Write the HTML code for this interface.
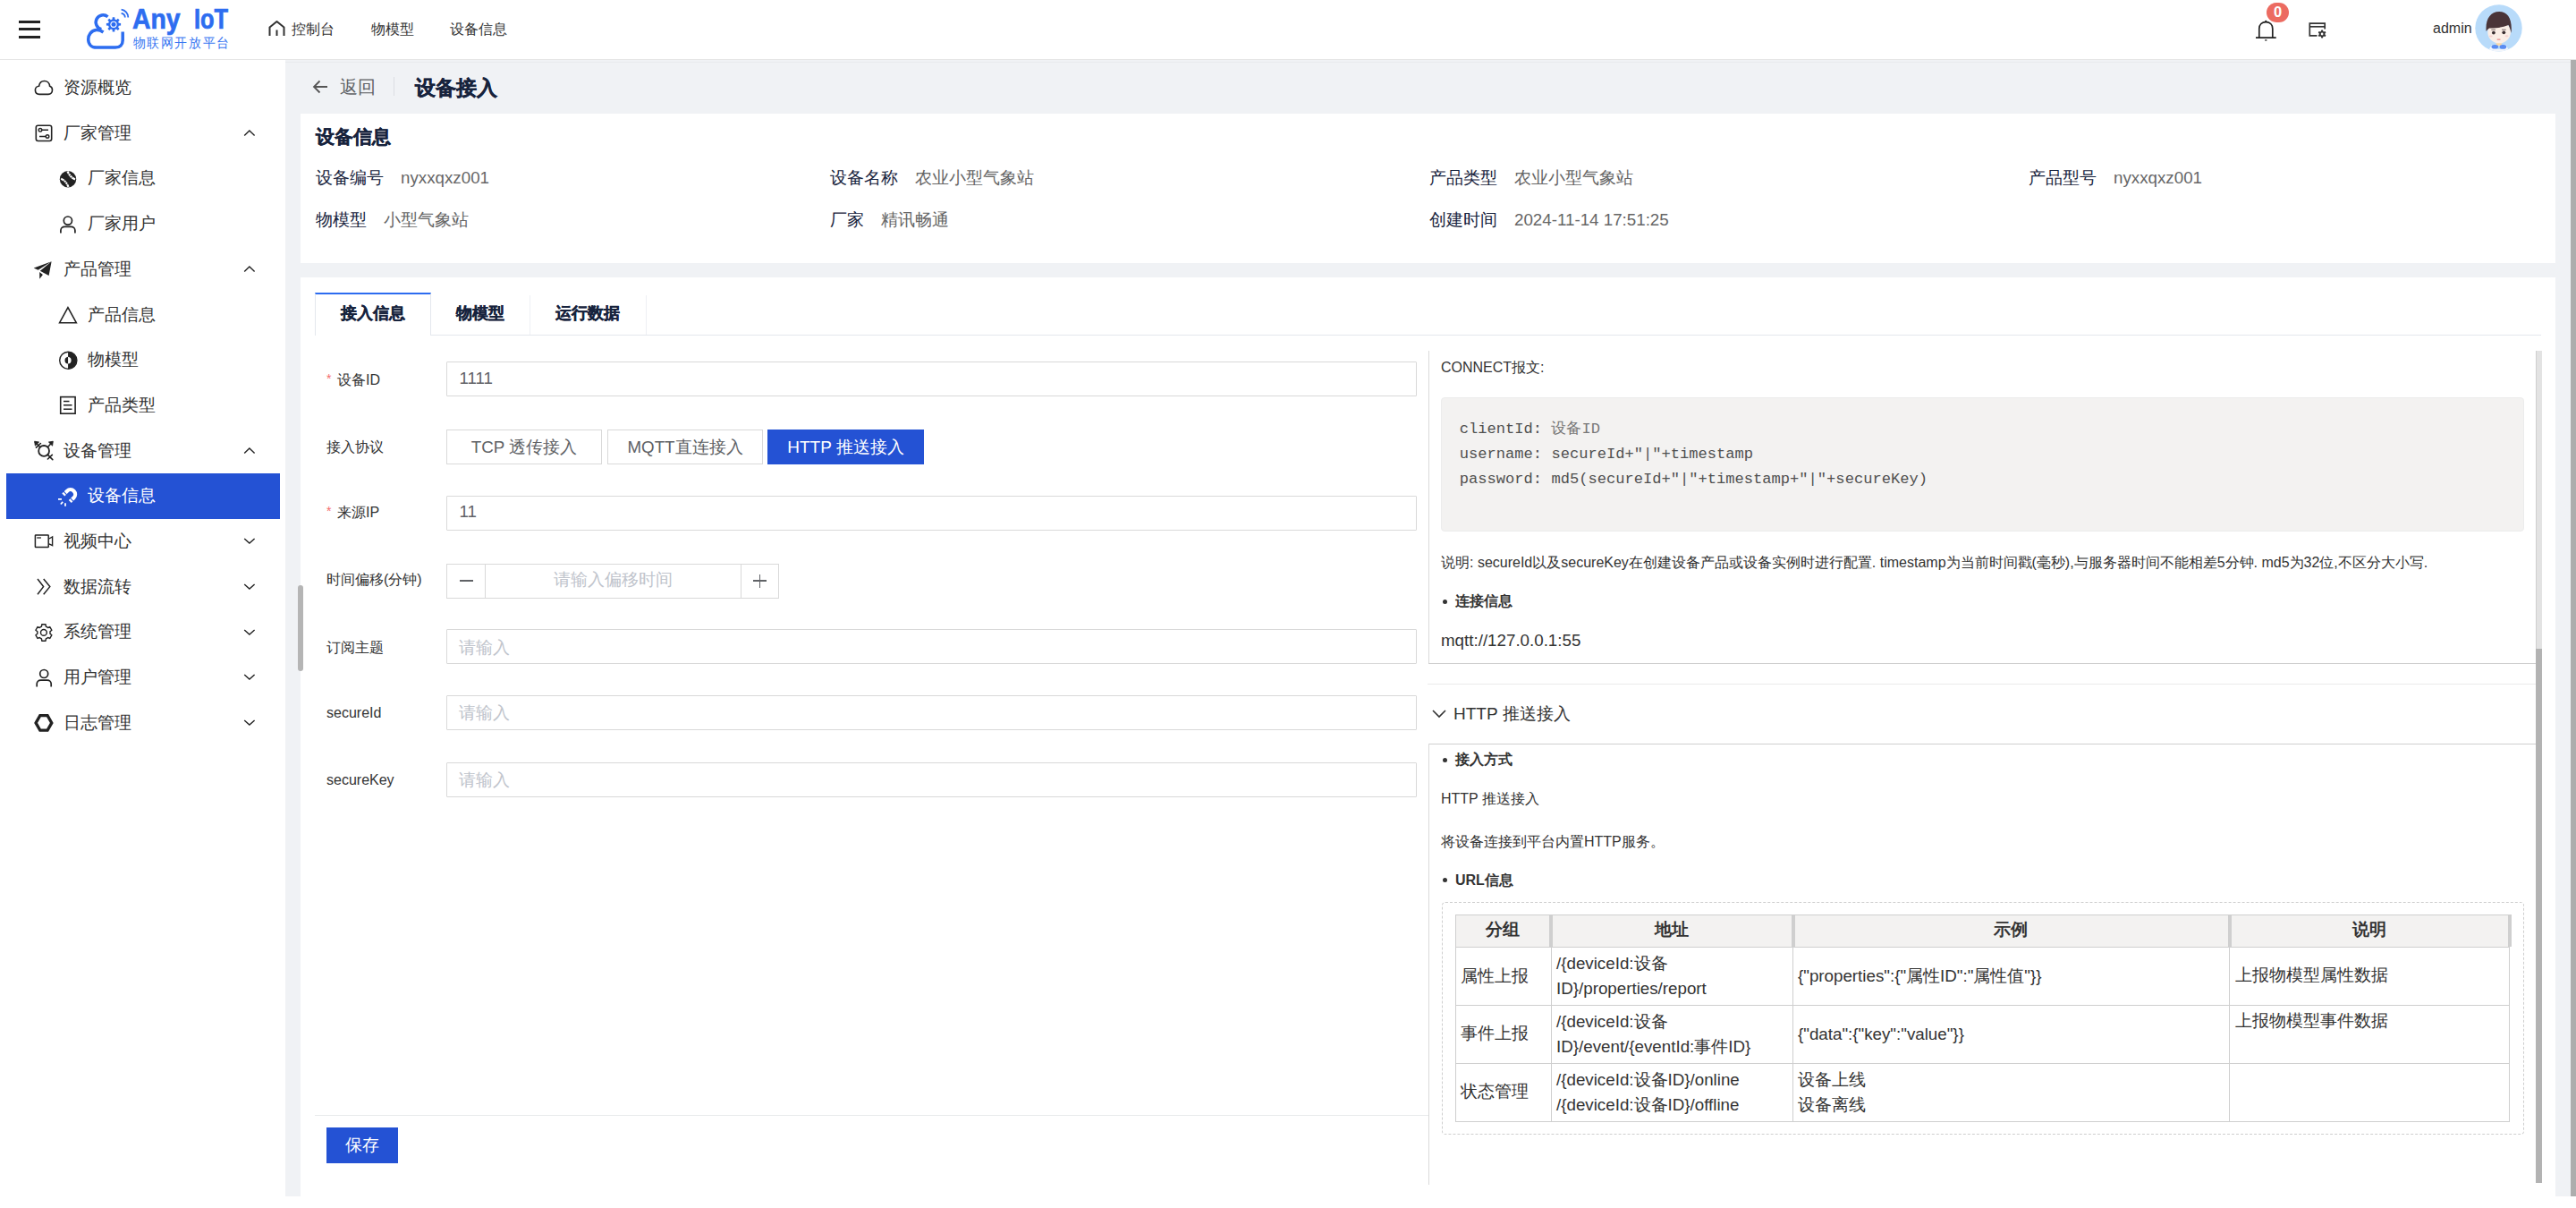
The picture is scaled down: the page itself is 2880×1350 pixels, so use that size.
<!DOCTYPE html>
<html><head><meta charset="utf-8">
<style>
*{box-sizing:border-box;margin:0;padding:0}
html,body{width:2880px;height:1350px;overflow:hidden;background:#fff;font-family:"Liberation Sans",sans-serif;color:#333}
.a{position:absolute;white-space:nowrap}
svg{position:absolute;overflow:visible}
.t{position:absolute;white-space:nowrap;height:40px;line-height:40px}
.side{font-size:19px;color:#333}
.chev{position:absolute;left:272px;width:13px;height:8px}
.lbl{font-size:16px;color:#333}
.inp{position:absolute;left:499px;width:1085px;height:39px;border:1px solid #d9d9d9;border-radius:1px;background:#fff}
.ph{font-size:18.75px;color:#c0c4cc}
.val{font-size:18.75px;color:#606266}
.il{font-size:19px;color:#17233d}
.iv{font-size:18.75px;color:#666}
</style></head><body>
<!-- HEADER -->
<div class="a" style="left:0;top:0;width:2880px;height:67px;background:#fff;border-bottom:1px solid #e6e6e6"></div>
<div class="a" style="left:21px;top:23px;width:24px;height:2.6px;background:#222"></div>
<div class="a" style="left:21px;top:31px;width:24px;height:2.6px;background:#222"></div>
<div class="a" style="left:21px;top:40.2px;width:24px;height:2.6px;background:#222"></div>
<!-- logo -->
<svg style="left:90px;top:0px" width="60" height="66" viewBox="90 0 60 66"><path d="M120.5 18.8 A8 8 0 1 0 113.4 32.6" fill="none" stroke="#2d6df0" stroke-width="3.5"/><path d="M115.5 36 C112.5 33.8 110 33.3 107.5 33.6 C102 34.3 98.7 38.8 98.7 44 C98.7 49.6 102.5 53.1 108 53.1 L129 53.1 C134 53.1 137.2 50 137.2 45 L137.2 35.5" fill="none" stroke="#2d6df0" stroke-width="3.5"/><path d="M128.45 21.48 L128.28 19.20 L125.72 19.20 L125.55 21.48 L123.91 22.16 L122.18 20.67 L120.37 22.48 L121.86 24.21 L121.18 25.85 L118.90 26.02 L118.90 28.58 L121.18 28.75 L121.86 30.39 L120.37 32.12 L122.18 33.93 L123.91 32.44 L125.55 33.12 L125.72 35.40 L128.28 35.40 L128.45 33.12 L130.09 32.44 L131.82 33.93 L133.63 32.12 L132.14 30.39 L132.82 28.75 L135.10 28.58 L135.10 26.02 L132.82 25.85 L132.14 24.21 L133.63 22.48 L131.82 20.67 L130.09 22.16Z" fill="#2d6df0"/><circle cx="127" cy="27.3" r="3.6" fill="#fff"/><circle cx="127" cy="27.3" r="2.5" fill="#2d6df0"/><path d="M135.6 10.6 A9 9 0 0 1 143.3 19.5" fill="none" stroke="#2d6df0" stroke-width="1.8"/><path d="M135.6 14.8 A4.8 4.8 0 0 1 139.8 19.5" fill="none" stroke="#2d6df0" stroke-width="1.8"/></svg>
<div class="a" style="left:147.8px;top:1.5px;font-size:31px;font-weight:bold;color:#2d6df0;-webkit-text-stroke:0.7px #2d6df0;line-height:40px;transform:scaleX(0.915);transform-origin:0 0">Any</div>
<div class="a" style="left:216.9px;top:1.5px;font-size:31px;font-weight:bold;color:#2d6df0;-webkit-text-stroke:0.7px #2d6df0;line-height:40px;transform:scaleX(0.82);transform-origin:0 0">IoT</div>
<div class="a" style="left:148.5px;top:37.5px;font-size:14px;color:#3a78f2;line-height:20px;letter-spacing:1.65px;transform:scaleY(1.08);transform-origin:0 50%">物联网开放平台</div>
<!-- nav -->
<svg style="left:300px;top:23px" width="19" height="19" viewBox="0 0 19 19"><path d="M1.5 17 V7.5 L9.5 1 L17.5 7.5 V17 M9.5 10.5 V17" fill="none" stroke="#333" stroke-width="2" stroke-linejoin="round"/></svg>
<div class="t" style="left:325.5px;top:12.7px;font-size:16px;color:#333">控制台</div>
<div class="t" style="left:414.5px;top:12.7px;font-size:16px;color:#333">物模型</div>
<div class="t" style="left:502.5px;top:12.7px;font-size:16px;color:#333">设备信息</div>
<!-- right header -->
<svg style="left:2518px;top:20px" width="30" height="30" viewBox="2518 20 30 30"><path d="M2525.8 42 V32 C2525.8 27.2 2529 24.6 2533.3 24.6 C2537.6 24.6 2540.8 27.2 2540.8 32 V42 M2522 42.2 H2544.7" fill="none" stroke="#222" stroke-width="1.7"/><circle cx="2533.3" cy="23.9" r="1.2" fill="#222"/><rect x="2532.2" y="44.3" width="2.2" height="1.3" fill="#222"/></svg>
<div class="a" style="left:2534px;top:3px;width:25px;height:22px;border-radius:11px;background:#ec6b61;color:#fff;font-size:16.5px;font-weight:bold;text-align:center;line-height:21px">0</div>
<svg style="left:2578px;top:22px" width="28" height="24" viewBox="2578 22 28 24"><path d="M2590.5 39.8 H2582.3 V26.1 H2599.2 V32.5" fill="none" stroke="#333" stroke-width="1.7"/><path d="M2582.3 29.8 H2599.2" stroke="#333" stroke-width="1.7"/><path d="M2597.40 35.08 L2596.90 33.47 L2595.30 33.47 L2594.80 35.08 L2594.22 35.41 L2592.58 35.04 L2591.78 36.43 L2592.92 37.67 L2592.92 38.33 L2591.78 39.57 L2592.58 40.96 L2594.22 40.59 L2594.80 40.92 L2595.30 42.53 L2596.90 42.53 L2597.40 40.92 L2597.98 40.59 L2599.62 40.96 L2600.42 39.57 L2599.28 38.33 L2599.28 37.67 L2600.42 36.43 L2599.62 35.04 L2597.98 35.41Z" fill="#333"/><circle cx="2596.1" cy="38" r="1.4" fill="#fff"/></svg>
<div class="t" style="left:2720px;top:12px;font-size:16px;color:#333">admin</div>
<svg style="left:2760px;top:0px" width="70" height="66" viewBox="2760 0 70 66"><defs><clipPath id="avc"><circle cx="2793.5" cy="31.4" r="26.2"/></clipPath></defs><g clip-path="url(#avc)"><rect x="2760" y="0" width="70" height="66" fill="#b8dbfa"/><path d="M2786 50 Q2793.8 60 2801.5 50 L2806 58 H2781 Z" fill="#f3f6fb"/><rect x="2790.8" y="46" width="6" height="5" fill="#f8d9a8"/><ellipse cx="2794.1" cy="36" rx="12.8" ry="12.3" fill="#fbeee6"/><path d="M2779.6 35 C2778.5 21 2784.5 13 2794 13 C2804 13 2809 21 2807.6 37 C2806.8 33.5 2806 31 2804.5 28 C2797 31 2789 31.8 2783 31.5 C2781.8 32.5 2780.6 33.5 2779.6 35 Z" fill="#4a3438"/><circle cx="2787.9" cy="36.6" r="1.9" fill="#3a2e30"/><circle cx="2799.3" cy="36.3" r="1.9" fill="#3a2e30"/><path d="M2785.3 33.3 H2790 M2797 33.2 H2801.7" stroke="#6a5a5a" stroke-width="0.9"/><ellipse cx="2784.8" cy="40.5" rx="2" ry="1.1" fill="#f6d2d0"/><ellipse cx="2802.5" cy="40.3" rx="2" ry="1.1" fill="#f6d2d0"/><path d="M2792.2 44.1 H2795" stroke="#e9898a" stroke-width="1.3" stroke-linecap="round"/><ellipse cx="2789.3" cy="52.2" rx="3.8" ry="2.3" fill="#5a8cf2"/><ellipse cx="2798.4" cy="52.4" rx="3.8" ry="2.3" fill="#5a8cf2"/></g></svg>
<!-- page scrollbar -->
<div class="a" style="left:2874px;top:67px;width:6px;height:1270px;background:#adadad"></div>


<!-- SIDEBAR -->
<div class="a" style="left:0;top:67px;width:319px;height:1270px;background:#fff"></div>
<div class="a" style="left:319px;top:67px;width:2555px;height:1270px;background:#f0f2f5"></div>
<div class="a" style="left:0;top:1337px;width:2880px;height:13px;background:#fff"></div>
<div class="a" style="left:319px;top:69px;width:2555px;height:1px;background:#e9eaed"></div>
<div class="t side" style="left:71px;top:78.0px;color:#333">资源概览</div>
<svg style="left:36px;top:86px" width="26" height="24" viewBox="36 86 26 24"><path d="M44 105.4 C40.5 105.4 39.4 102.8 39.4 100.6 C39.4 98.2 41.2 96.2 43.6 96.2 C44.2 92.6 46.8 90.5 49.6 90.5 C52.8 90.5 55.3 93 55.6 96.3 C57.4 96.8 58.5 98.5 58.5 100.6 C58.5 103.2 56.8 105.4 54 105.4 Z" fill="none" stroke="#222" stroke-width="1.6"/></svg>
<div class="t side" style="left:71px;top:128.7px;color:#333">厂家管理</div>
<svg style="left:37px;top:137px" width="24" height="24" viewBox="37 137 24 24"><rect x="40.3" y="140.3" width="17.4" height="17.2" rx="2.2" fill="none" stroke="#222" stroke-width="1.6"/><path d="M46.5 145.3 H54 M44 152.5 H51.5" stroke="#222" stroke-width="1.5"/><circle cx="45" cy="145.3" r="1.8" fill="#fff" stroke="#222" stroke-width="1.4"/><circle cx="53" cy="152.5" r="1.8" fill="#fff" stroke="#222" stroke-width="1.4"/></svg>
<svg style="left:272px;top:145.1px" width="14" height="8" viewBox="0 0 14 8"><path d="M1.2 6.5 L6.9 1 L12.6 6.5" fill="none" stroke="#222" stroke-width="1.4"/></svg>
<div class="t side" style="left:98px;top:179.4px;color:#333">厂家信息</div>
<svg style="left:64px;top:188px" width="24" height="24" viewBox="64 188 24 24"><circle cx="76" cy="200.2" r="9.2" fill="#222"/><path d="M75.5 191.5 C77 195 79.5 198.5 84 200.5 M68.2 199.8 C72.5 201.5 75 205 76.5 208.8" fill="none" stroke="#fff" stroke-width="2.2"/><path d="M76.2 194.8 L78.3 193.2 M77.8 197 L79.9 195.4 M79.6 198.9 L81.6 197.4 M70.5 202.8 L72.6 201.2 M72.4 204.6 L74.5 203 M74.2 206.6 L76.3 205" stroke="#222" stroke-width="0.8"/></svg>
<div class="t side" style="left:98px;top:230.1px;color:#333">厂家用户</div>
<svg style="left:64px;top:239px" width="24" height="24" viewBox="64 239 24 24"><circle cx="75.9" cy="246.6" r="4.6" fill="none" stroke="#222" stroke-width="1.7"/><path d="M67.9 260.6 V257.6 C67.9 255.2 69.8 253.4 72.2 253.4 H79.6 C82 253.4 83.9 255.2 83.9 257.6 V260.6" fill="none" stroke="#222" stroke-width="1.7"/></svg>
<div class="t side" style="left:71px;top:280.8px;color:#333">产品管理</div>
<svg style="left:36px;top:290px" width="24" height="24" viewBox="36 290 24 24"><path d="M57.6 292.2 L37.7 299.4 L42.6 301.8 Z M57.6 292.2 L44.8 302.8 L54.6 307.9 Z M44.2 304.1 L47.9 307.1 L44.2 311.8 Z" fill="#222"/></svg>
<svg style="left:272px;top:297.0px" width="14" height="8" viewBox="0 0 14 8"><path d="M1.2 6.5 L6.9 1 L12.6 6.5" fill="none" stroke="#222" stroke-width="1.4"/></svg>
<div class="t side" style="left:98px;top:331.5px;color:#333">产品信息</div>
<svg style="left:63px;top:340px" width="26" height="24" viewBox="63 340 26 24"><path d="M75.95 343.6 L85.3 360.7 H66.6 Z" fill="none" stroke="#222" stroke-width="1.6" stroke-linejoin="miter"/></svg>
<div class="t side" style="left:98px;top:382.2px;color:#333">物模型</div>
<svg style="left:63px;top:390px" width="26" height="26" viewBox="63 390 26 26"><circle cx="76.3" cy="402.8" r="9.6" fill="none" stroke="#222" stroke-width="1.4"/><path d="M76.05 393.2 A9.6 9.6 0 0 1 76.05 412.4 Z" fill="#222"/><path d="M76.05 398.7 A3.97 3.97 0 0 0 76.05 406.6 Z" fill="#222"/><path d="M76.05 398.7 A3.97 3.97 0 0 1 76.05 406.6 Z" fill="#fff"/></svg>
<div class="t side" style="left:98px;top:432.9px;color:#333">产品类型</div>
<svg style="left:64px;top:440px" width="24" height="26" viewBox="64 440 24 26"><rect x="67.7" y="443.6" width="16.4" height="18.6" fill="none" stroke="#222" stroke-width="1.6"/><path d="M71 448.5 H77.5 M71 452.8 H80.5 M71 457.2 H80.5" stroke="#222" stroke-width="1.5"/></svg>
<div class="t side" style="left:71px;top:483.6px;color:#333">设备管理</div>
<svg style="left:36px;top:490px" width="26" height="28" viewBox="36 490 26 28"><circle cx="49.1" cy="503.9" r="5.9" fill="none" stroke="#222" stroke-width="1.8"/><path d="M44.9 499.7 L39.4 494.2 M53.3 499.7 L58.3 494.2 M53.2 508.1 L58.8 513.6 M53.4 513 L58.3 508.4 M40.5 500.2 L45.4 495.5" fill="none" stroke="#222" stroke-width="1.6" stroke-linecap="round"/><path d="M38.6 493.2 L43.6 494 L39.4 498.2 Z M59.3 493.2 L54.4 494 L58.6 498.2 Z" fill="#222" stroke="#222" stroke-width="0.8"/></svg>
<svg style="left:272px;top:499.6px" width="14" height="8" viewBox="0 0 14 8"><path d="M1.2 6.5 L6.9 1 L12.6 6.5" fill="none" stroke="#222" stroke-width="1.4"/></svg>
<div class="a" style="left:7px;top:528.9px;width:306px;height:51px;background:#2452d4"></div>
<div class="t side" style="left:98px;top:534.3px;color:#fff">设备信息</div>
<svg style="left:60px;top:540px" width="30" height="30" viewBox="60 540 30 30"><path d="M70.8 553 L75.05 548.75 A5.3 5.3 0 0 1 82.55 556.25 L78.3 560.5" fill="none" stroke="#fff" stroke-width="4.2"/><path d="M71.0 549.2 L74.6 552.8 M78.5 556.7 L82.1 560.3" stroke="#2452d4" stroke-width="1.1"/><path d="M65 557.8 H69 M67.9 563.5 L70.2 560.8 M73 562.2 V565.8" stroke="#fff" stroke-width="1.8"/></svg>
<div class="t side" style="left:71px;top:585.0px;color:#333">视频中心</div>
<svg style="left:36px;top:594px" width="26" height="22" viewBox="36 594 26 22"><rect x="39.4" y="597.9" width="14.8" height="13.7" rx="0.6" fill="none" stroke="#222" stroke-width="1.5"/><path d="M41.2 601 H45.9" stroke="#222" stroke-width="1.3"/><path d="M54.9 602 L58.6 599.9 V609.7 L54.9 607.8" fill="none" stroke="#222" stroke-width="1.4"/></svg>
<svg style="left:272px;top:601.4px" width="14" height="8" viewBox="0 0 14 8"><path d="M1.2 1 L6.9 6.1 L12.6 1" fill="none" stroke="#222" stroke-width="1.4"/></svg>
<div class="t side" style="left:71px;top:635.7px;color:#333">数据流转</div>
<svg style="left:38px;top:644px" width="22" height="24" viewBox="38 644 22 24"><path d="M42 647 L48.6 655.6 L42 664.3 M48.7 647 L55.8 655.6 L48.7 664.3" fill="none" stroke="#222" stroke-width="1.5"/></svg>
<svg style="left:272px;top:652.0px" width="14" height="8" viewBox="0 0 14 8"><path d="M1.2 1 L6.9 6.1 L12.6 1" fill="none" stroke="#222" stroke-width="1.4"/></svg>
<div class="t side" style="left:71px;top:686.4px;color:#333">系统管理</div>
<svg style="left:36px;top:694px" width="26" height="26" viewBox="36 694 26 26"><path d="M51.36 700.23 L51.01 697.84 L46.79 697.84 L46.44 700.23 L44.27 701.48 L42.03 700.59 L39.91 704.25 L41.81 705.75 L41.81 708.25 L39.91 709.75 L42.03 713.41 L44.27 712.52 L46.44 713.77 L46.79 716.16 L51.01 716.16 L51.36 713.77 L53.53 712.52 L55.77 713.41 L57.89 709.75 L55.99 708.25 L55.99 705.75 L57.89 704.25 L55.77 700.59 L53.53 701.48Z" fill="none" stroke="#222" stroke-width="1.45" stroke-linejoin="round"/><circle cx="48.9" cy="706.9" r="3.4" fill="none" stroke="#222" stroke-width="1.45"/></svg>
<svg style="left:272px;top:702.7px" width="14" height="8" viewBox="0 0 14 8"><path d="M1.2 1 L6.9 6.1 L12.6 1" fill="none" stroke="#222" stroke-width="1.4"/></svg>
<div class="t side" style="left:71px;top:737.1px;color:#333">用户管理</div>
<svg style="left:38px;top:745px" width="24" height="24" viewBox="38 745 24 24"><circle cx="49.2" cy="753.0" r="4.5" fill="none" stroke="#222" stroke-width="1.7"/><path d="M41.2 767.4 V764.4 C41.2 762 43.1 760.2 45.5 760.2 H52.9 C55.3 760.2 57.2 762 57.2 764.4 V767.4" fill="none" stroke="#222" stroke-width="1.7"/></svg>
<svg style="left:272px;top:753.3px" width="14" height="8" viewBox="0 0 14 8"><path d="M1.2 1 L6.9 6.1 L12.6 1" fill="none" stroke="#222" stroke-width="1.4"/></svg>
<div class="t side" style="left:71px;top:787.8px;color:#333">日志管理</div>
<svg style="left:36px;top:795px" width="26" height="26" viewBox="36 795 26 26"><path d="M40.1 807.9 L44.8 799.7 H53.1 L57.8 807.9 L53.1 816.1 H44.8 Z" fill="none" stroke="#222" stroke-width="3.3" stroke-linejoin="miter"/></svg>
<svg style="left:272px;top:804.0px" width="14" height="8" viewBox="0 0 14 8"><path d="M1.2 1 L6.9 6.1 L12.6 1" fill="none" stroke="#222" stroke-width="1.4"/></svg>
<!-- CONTENT -->
<svg style="left:349px;top:89px" width="18" height="16" viewBox="0 0 18 16"><path d="M17 8 H2 M8.5 1.5 L2 8 L8.5 14.5" fill="none" stroke="#555" stroke-width="1.8"/></svg>
<div class="t" style="left:380px;top:77px;font-size:20px;color:#606266">返回</div>
<div class="a" style="left:440px;top:86px;width:1px;height:21px;background:#dcdee2"></div>
<div class="t" style="left:463.5px;top:77.5px;font-size:23px;font-weight:bold;color:#17233d;-webkit-text-stroke:0.35px #17233d">设备接入</div>
<div class="a" style="left:336px;top:127px;width:2521px;height:167px;background:#fff"></div>
<div class="t" style="left:352.5px;top:132.5px;font-size:21px;font-weight:bold;color:#17233d;-webkit-text-stroke:0.3px #17233d">设备信息</div>
<div class="t" style="left:352.5px;top:179.3px"><span class="il">设备编号</span><span class="iv" style="margin-left:19.5px">nyxxqxz001</span></div>
<div class="t" style="left:927.5px;top:179.3px"><span class="il">设备名称</span><span class="iv" style="margin-left:19.5px">农业小型气象站</span></div>
<div class="t" style="left:1597.5px;top:179.3px"><span class="il">产品类型</span><span class="iv" style="margin-left:19.5px">农业小型气象站</span></div>
<div class="t" style="left:2267.5px;top:179.3px"><span class="il">产品型号</span><span class="iv" style="margin-left:19.5px">nyxxqxz001</span></div>
<div class="t" style="left:352.5px;top:226.0px"><span class="il">物模型</span><span class="iv" style="margin-left:19.5px">小型气象站</span></div>
<div class="t" style="left:927.5px;top:226.0px"><span class="il">厂家</span><span class="iv" style="margin-left:19.5px">精讯畅通</span></div>
<div class="t" style="left:1597.5px;top:226.0px"><span class="il">创建时间</span><span class="iv" style="margin-left:19.5px">2024-11-14 17:51:25</span></div>
<div class="a" style="left:336px;top:310px;width:2521px;height:1027px;background:#fff"></div>
<div class="a" style="left:352px;top:374px;width:2489px;height:1px;background:#e4e7ed"></div>
<div class="a" style="left:352px;top:327px;width:130px;height:48px;background:#fff;border-left:1px solid #e4e7ed;border-right:1px solid #e4e7ed;border-top:2px solid #2d6cf0"></div>
<div class="a" style="left:592px;top:330px;width:1px;height:44px;background:#eef0f4"></div>
<div class="a" style="left:722px;top:330px;width:1px;height:44px;background:#eef0f4"></div>
<div class="t" style="left:352px;width:130px;text-align:center;top:330px;font-size:18.3px;font-weight:bold;color:#17233d;-webkit-text-stroke:0.3px #17233d">接入信息</div>
<div class="t" style="left:482px;width:110px;text-align:center;top:330px;font-size:18.3px;font-weight:bold;color:#17233d;-webkit-text-stroke:0.3px #17233d">物模型</div>
<div class="t" style="left:592px;width:130px;text-align:center;top:330px;font-size:18.3px;font-weight:bold;color:#17233d;-webkit-text-stroke:0.3px #17233d">运行数据</div>
<div class="t" style="left:365px;top:402.5px;font-size:14px;color:#f56c6c">*</div>
<div class="t lbl" style="left:377px;top:404.5px">设备ID</div>
<div class="inp" style="top:404.3px"></div>
<div class="t val" style="left:513.5px;top:403.0px">1111</div>
<div class="t lbl" style="left:365px;top:480.0px">接入协议</div>
<div class="a" style="left:499px;top:480.2px;width:174px;height:39px;border:1px solid #d9d9d9;background:#fff;color:#606266;font-size:18.75px;text-align:center;line-height:37px">TCP 透传接入</div>
<div class="a" style="left:679px;top:480.2px;width:174px;height:39px;border:1px solid #d9d9d9;background:#fff;color:#606266;font-size:18.75px;text-align:center;line-height:37px">MQTT直连接入</div>
<div class="a" style="left:858px;top:480.2px;width:175px;height:39px;background:#2452d4;color:#fff;font-size:19px;text-align:center;line-height:39px">HTTP 推送接入</div>
<div class="t" style="left:365px;top:551.4px;font-size:14px;color:#f56c6c">*</div>
<div class="t lbl" style="left:377px;top:553.4px">来源IP</div>
<div class="inp" style="top:553.5px"></div>
<div class="t val" style="left:513.5px;top:551.9px">11</div>
<div class="t lbl" style="left:365px;top:628.4px">时间偏移(分钟)</div>
<div class="a" style="left:499px;top:629.7px;width:372px;height:39px;border:1px solid #d9d9d9;background:#fff"></div>
<div class="a" style="left:500px;top:630.7px;width:43px;height:37px;background:#fff;border-right:1px solid #d9d9d9"></div>
<div class="a" style="left:828px;top:630.7px;width:42px;height:37px;background:#fff;border-left:1px solid #d9d9d9"></div>
<div class="a" style="left:514px;top:648.4px;width:15px;height:1.2px;background:#606266"></div>
<div class="a" style="left:842px;top:648.4px;width:15px;height:1.2px;background:#606266"></div>
<div class="a" style="left:848.9px;top:641.5px;width:1.2px;height:15px;background:#606266"></div>
<div class="t ph" style="left:543px;width:285px;text-align:center;top:628.4px;font-size:19px">请输入偏移时间</div>
<div class="t lbl" style="left:365px;top:703.8px">订阅主题</div>
<div class="inp" style="top:703.2px"></div>
<div class="t ph" style="left:513px;top:703.8px">请输入</div>
<div class="t lbl" style="left:365px;top:777.3px">secureId</div>
<div class="inp" style="top:777.2px"></div>
<div class="t ph" style="left:513px;top:777.3px">请输入</div>
<div class="t lbl" style="left:365px;top:852.0px">secureKey</div>
<div class="inp" style="top:852.2px"></div>
<div class="t ph" style="left:513px;top:852.0px">请输入</div>
<div class="a" style="left:352px;top:1246px;width:1245px;height:1px;background:#e8eaec"></div>
<div class="a" style="left:365px;top:1260px;width:80px;height:40px;background:#2452d4;color:#fff;font-size:19px;text-align:center;line-height:40px">保存</div>
<div class="a" style="left:1597px;top:391.6px;width:1px;height:350px;background:#d9d9d9"></div>
<div class="a" style="left:1597px;top:741px;width:1238px;height:1px;background:#cfcfcf"></div>
<div class="a" style="left:2835px;top:391.6px;width:7px;height:333px;background:#e3e3e3;border-left:1px solid #cfcfcf"></div>
<div class="a" style="left:2835px;top:724.7px;width:7px;height:597px;background:#b3b3b3"></div>
<div class="t" style="left:1611px;top:390.5px;font-size:16px;color:#333">CONNECT报文:</div>
<div class="a" style="left:1611px;top:444.4px;width:1211px;height:150px;background:#f3f2f1;border:1px solid #ececec;border-radius:4px"></div>
<div class="t" style="left:1631.8px;top:460.4px;font-family:'Liberation Mono',monospace;font-size:17.1px;color:#505050">clientId: <span style="color:#777">设备ID</span></div>
<div class="t" style="left:1631.8px;top:488.4px;font-family:'Liberation Mono',monospace;font-size:17.1px;color:#505050">username: secureId+"|"+timestamp</div>
<div class="t" style="left:1631.8px;top:515.6px;font-family:'Liberation Mono',monospace;font-size:17.1px;color:#505050">password: md5(secureId+"|"+timestamp+"|"+secureKey)</div>
<div class="t" style="left:1611px;top:608.5px;font-size:16px;color:#333">说明: secureId以及secureKey在创建设备产品或设备实例时进行配置. timestamp为当前时间戳(毫秒),与服务器时间不能相差5分钟. md5为32位,不区分大小写.</div>
<div class="a" style="left:1613px;top:669.5px;width:5px;height:5px;border-radius:50%;background:#333"></div>
<div class="t" style="left:1627px;top:652.0px;font-size:16px;font-weight:bold;color:#333">连接信息</div>
<div class="t" style="left:1611px;top:696px;font-size:18.75px;color:#333">mqtt://127.0.0.1:55</div>
<div class="a" style="left:1596px;top:764px;width:1239px;height:1px;background:#ebebeb"></div>
<svg style="left:1601px;top:793px" width="16" height="9" viewBox="0 0 16 9"><path d="M1 1 L8 8 L15 1" fill="none" stroke="#333" stroke-width="1.6"/></svg>
<div class="t" style="left:1625px;top:777.5px;font-size:19px;color:#333">HTTP 推送接入</div>
<div class="a" style="left:1597px;top:831px;width:1238px;height:1px;background:#cfcfcf"></div>
<div class="a" style="left:1597px;top:831px;width:1px;height:493px;background:#d9d9d9"></div>
<div class="a" style="left:1613px;top:846.5px;width:5px;height:5px;border-radius:50%;background:#333"></div>
<div class="t" style="left:1627px;top:829.0px;font-size:16px;font-weight:bold;color:#333">接入方式</div>
<div class="t" style="left:1611px;top:872.5px;font-size:16px;color:#333">HTTP 推送接入</div>
<div class="t" style="left:1611px;top:921px;font-size:16px;color:#333">将设备连接到平台内置HTTP服务。</div>
<div class="a" style="left:1613px;top:981.0px;width:5px;height:5px;border-radius:50%;background:#333"></div>
<div class="t" style="left:1627px;top:963.5px;font-size:16px;font-weight:bold;color:#333">URL信息</div>
<div class="a" style="left:1612px;top:1007.5px;width:1210px;height:260px;border:1px dashed #cfcfcf;border-radius:4px"></div>
<div class="a" style="left:1626.6px;top:1021.5px;width:1179.4px;height:36.5px;background:#f3f2f1"></div>
<div class="a" style="left:1626.6px;top:1021.5px;width:1179.4px;height:1px;background:#cfcfcf"></div>
<div class="a" style="left:1626.6px;top:1058px;width:1179.4px;height:1px;background:#cfcfcf"></div>
<div class="a" style="left:1626.6px;top:1123px;width:1179.4px;height:1px;background:#cfcfcf"></div>
<div class="a" style="left:1626.6px;top:1188.4px;width:1179.4px;height:1px;background:#cfcfcf"></div>
<div class="a" style="left:1626.6px;top:1253px;width:1179.4px;height:1px;background:#cfcfcf"></div>
<div class="a" style="left:1626.6px;top:1021.5px;width:1px;height:231.5px;background:#cfcfcf"></div>
<div class="a" style="left:1733.5px;top:1021.5px;width:1px;height:231.5px;background:#cfcfcf"></div>
<div class="a" style="left:1732.0px;top:1021.5px;width:4px;height:36.5px;background:#cfcfcf"></div>
<div class="a" style="left:2004px;top:1021.5px;width:1px;height:231.5px;background:#cfcfcf"></div>
<div class="a" style="left:2002.5px;top:1021.5px;width:4px;height:36.5px;background:#cfcfcf"></div>
<div class="a" style="left:2492.2px;top:1021.5px;width:1px;height:231.5px;background:#cfcfcf"></div>
<div class="a" style="left:2490.7px;top:1021.5px;width:4px;height:36.5px;background:#cfcfcf"></div>
<div class="a" style="left:2805px;top:1021.5px;width:1px;height:231.5px;background:#cfcfcf"></div>
<div class="a" style="left:2803.5px;top:1021.5px;width:4px;height:36.5px;background:#cfcfcf"></div>
<div class="t" style="left:1626.6px;width:106.9px;text-align:center;top:1019.3px;font-size:19px;font-weight:bold;color:#333">分组</div>
<div class="t" style="left:1733.5px;width:270.5px;text-align:center;top:1019.3px;font-size:19px;font-weight:bold;color:#333">地址</div>
<div class="t" style="left:2004px;width:488.2px;text-align:center;top:1019.3px;font-size:19px;font-weight:bold;color:#333">示例</div>
<div class="t" style="left:2492.2px;width:312.8px;text-align:center;top:1019.3px;font-size:19px;font-weight:bold;color:#333">说明</div>
<div class="t" style="left:1633px;top:1070.5px;font-size:18.75px;color:#333">属性上报</div>
<div class="t" style="left:1740px;top:1056.5px;font-size:18.75px;color:#333">/{deviceId:设备</div>
<div class="t" style="left:1740px;top:1085.0px;font-size:18.75px;color:#333">ID}/properties/report</div>
<div class="t" style="left:2010px;top:1070.5px;font-size:18.75px;color:#333">{"properties":{"属性ID":"属性值"}}</div>
<div class="t" style="left:2499px;top:1070.4px;font-size:18.75px;color:#333">上报物模型属性数据</div>
<div class="t" style="left:1633px;top:1134.8px;font-size:18.75px;color:#333">事件上报</div>
<div class="t" style="left:1740px;top:1122.0px;font-size:18.75px;color:#333">/{deviceId:设备</div>
<div class="t" style="left:1740px;top:1150.3px;font-size:18.75px;color:#333">ID}/event/{eventId:事件ID}</div>
<div class="t" style="left:2010px;top:1136.0px;font-size:18.75px;color:#333">{"data":{"key":"value"}}</div>
<div class="t" style="left:2499px;top:1121.4px;font-size:18.75px;color:#333">上报物模型事件数据</div>
<div class="t" style="left:1633px;top:1200.4px;font-size:18.75px;color:#333">状态管理</div>
<div class="t" style="left:1740px;top:1186.9px;font-size:18.75px;color:#333">/{deviceId:设备ID}/online</div>
<div class="t" style="left:1740px;top:1214.5px;font-size:18.75px;color:#333">/{deviceId:设备ID}/offline</div>
<div class="t" style="left:2010px;top:1186.9px;font-size:18.75px;color:#333">设备上线</div>
<div class="t" style="left:2010px;top:1214.5px;font-size:18.75px;color:#333">设备离线</div>
<div class="a" style="left:333px;top:654px;width:6px;height:96px;border-radius:3px;background:#b5b5b5"></div>
</body></html>
